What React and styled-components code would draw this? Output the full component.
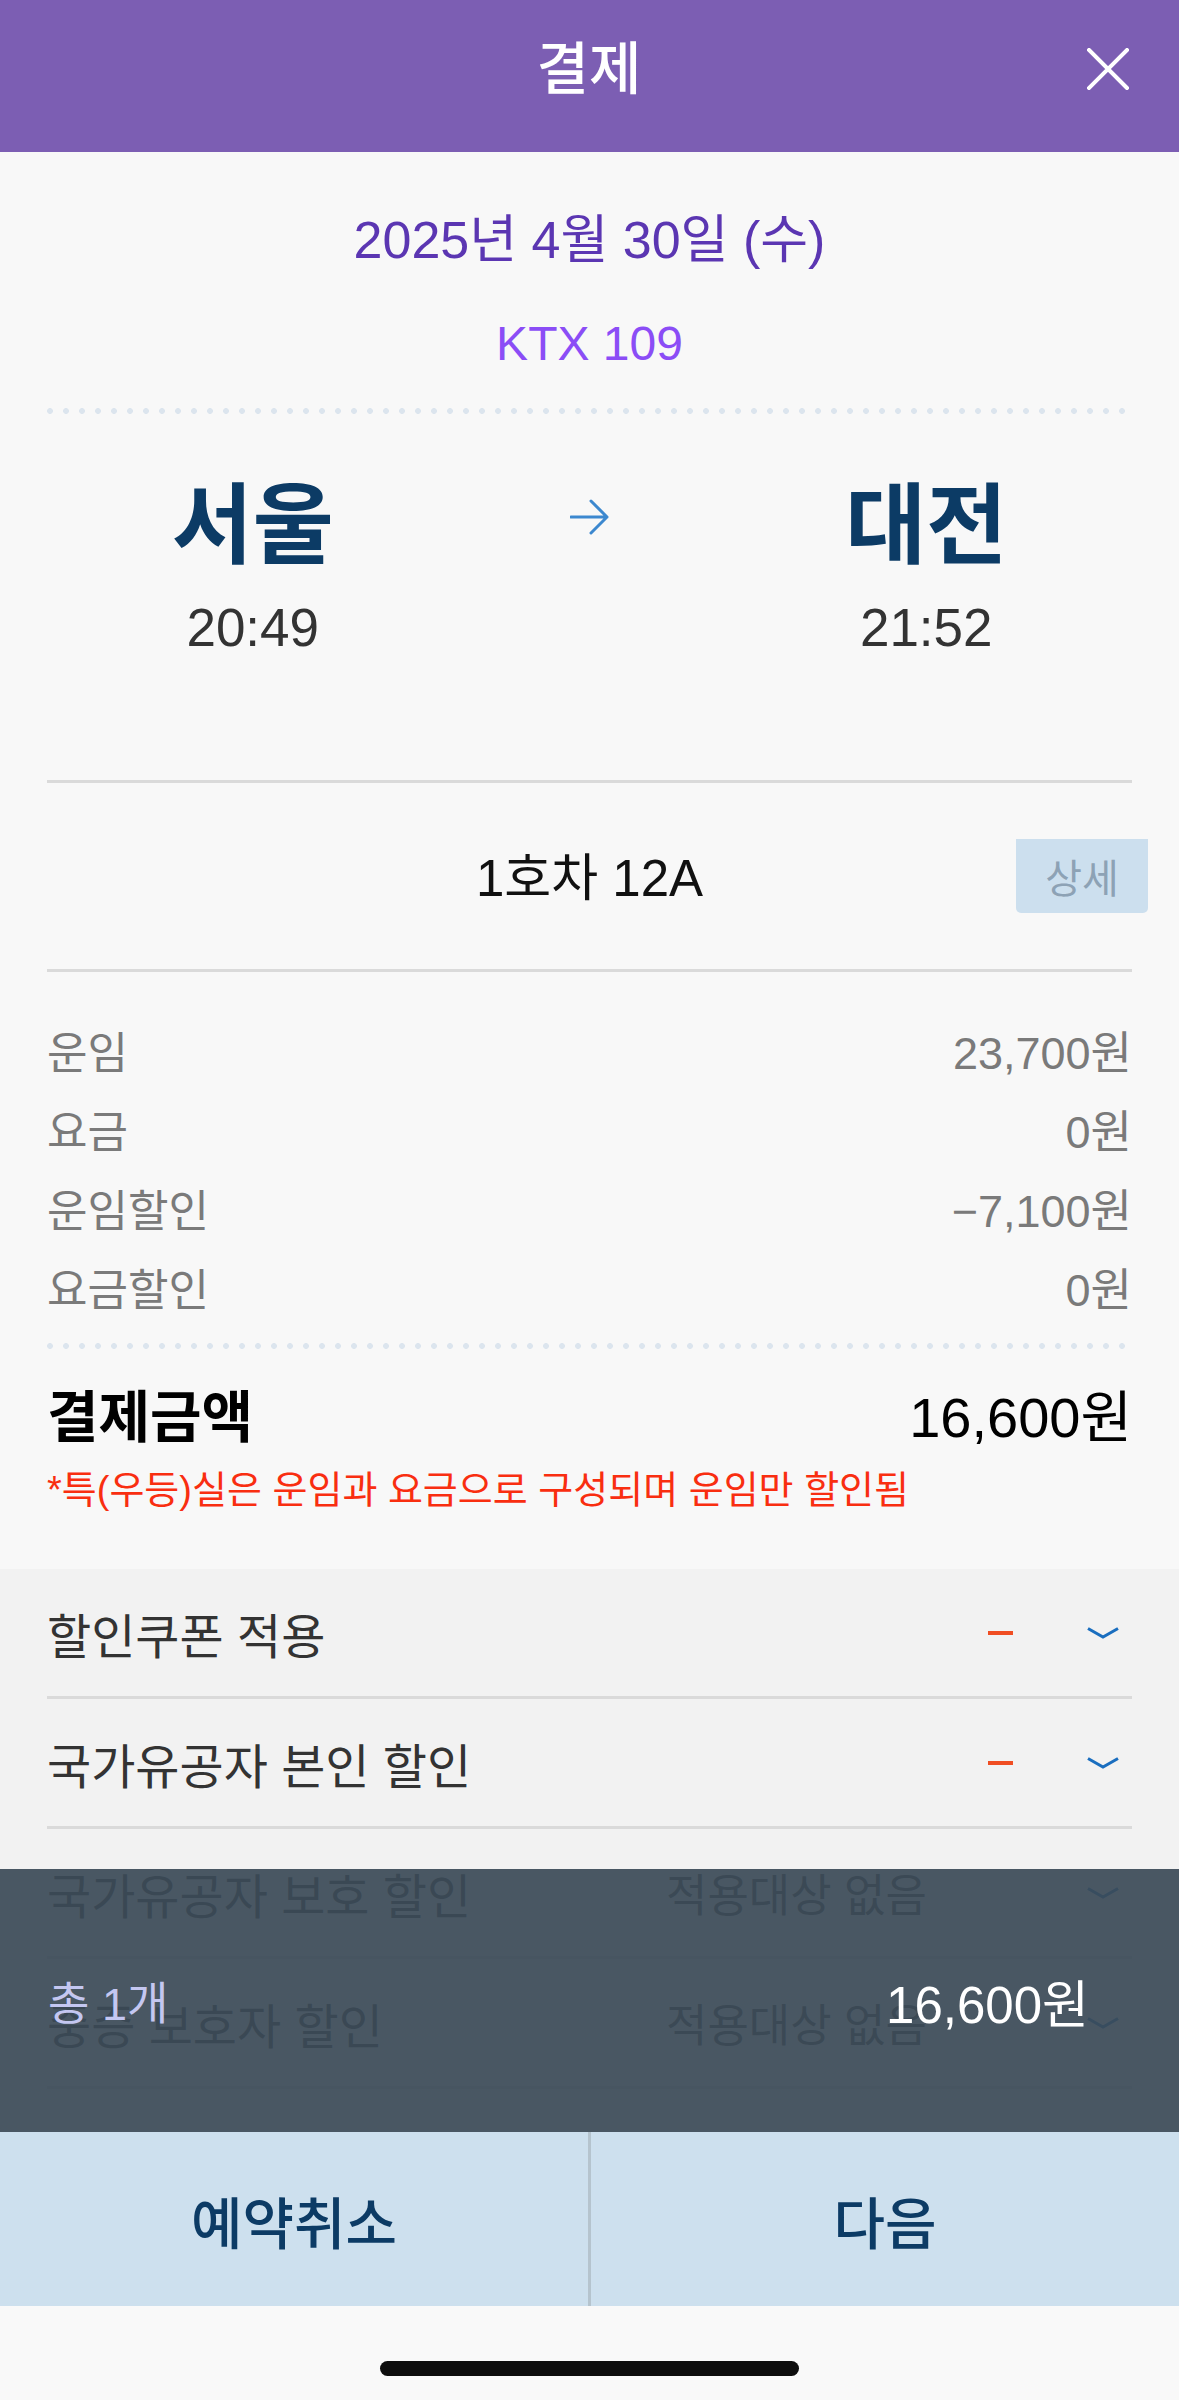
import React from "react";
import styled, { createGlobalStyle } from "styled-components";

const GlobalStyle = createGlobalStyle`
  html, body { margin: 0; padding: 0; background: #f8f8f8; }
  body { font-family: "Liberation Sans", "Noto Sans CJK KR", sans-serif; }
  * { box-sizing: border-box; }
`;

const Page = styled.div`
  position: relative;
  width: 1179px;
  min-height: 2400px;
  display: flex;
  flex-direction: column;
  background: #f8f8f8;
  overflow: hidden;
`;

const Header = styled.header`
  height: 152px;
  background: #7c5eb3;
  display: grid;
  grid-template-columns: 1fr auto 1fr;
  align-items: center;
  padding: 0 50px 14px 49px;
`;

const Title = styled.h1`
  grid-column: 2;
  margin: 0;
  font-size: 57px;
  font-weight: 500;
  color: #ffffff;
  line-height: 64px;
`;

const CloseButton = styled.button`
  grid-column: 3;
  justify-self: end;
  width: 42px;
  height: 42px;
  padding: 0;
  border: none;
  background: none;
  display: flex;
`;

const TrainInfo = styled.section`
  display: flex;
  flex-direction: column;
  align-items: center;
  padding-top: 58px;
`;

const DateText = styled.div`
  font-size: 52px;
  line-height: 60px;
  color: #5b36b2;
`;

const TrainNo = styled.div`
  margin-top: 44px;
  font-size: 48px;
  line-height: 60px;
  color: #8b4df6;
`;

const Dotted = styled.div`
  align-self: stretch;
  margin: ${(p) => p.$top}px 47px 0;
  height: 6px;
  background-image: radial-gradient(circle, #dce5ee 2.6px, transparent 3.2px);
  background-size: 16px 6px;
  background-position: -5px 0;
  background-repeat: repeat-x;
`;

const Route = styled.div`
  display: grid;
  grid-template-columns: 1fr 262px 1fr;
  align-items: center;
  padding: 54px 47px 0;
`;

const Stop = styled.div`
  display: flex;
  flex-direction: column;
  align-items: center;
`;

const Station = styled.div`
  font-family: "Noto Sans CJK KR", sans-serif;
  font-size: 88px;
  font-weight: 700;
  line-height: 100px;
  color: #0c3b65;
`;

const Time = styled.div`
  margin-top: 28px;
  font-size: 53px;
  line-height: 64px;
  color: #333333;
`;

const ArrowWrap = styled.div`
  align-self: start;
  display: flex;
  justify-content: center;
  padding-top: 31px;
`;

const Rule = styled.div`
  margin: ${(p) => p.$top || 0}px 47px 0;
  height: 3px;
  background: #dadada;
`;

const SeatRow = styled.div`
  height: 186px;
  display: grid;
  grid-template-columns: 1fr auto 1fr;
  align-items: center;
  padding: 0 31px;
`;

const SeatText = styled.div`
  grid-column: 2;
  font-size: 51px;
  line-height: 60px;
  color: #111111;
  padding-top: 6px;
`;

const DetailButton = styled.button`
  grid-column: 3;
  justify-self: end;
  width: 132px;
  height: 74px;
  border: none;
  border-radius: 0 0 5px 5px;
  background: #ccdfee;
  color: #8da2b5;
  font-family: "Noto Sans CJK KR", sans-serif;
  font-size: 40px;
  padding: 0;
`;

const FareList = styled.div`
  display: flex;
  flex-direction: column;
  padding: 38px 47px 0;
`;

const FareRow = styled.div`
  display: flex;
  justify-content: space-between;
  align-items: center;
  height: 79px;
  font-size: 44px;
  color: #7a7a7a;
`;

const FareValue = styled.span`
  font-size: 45px;
`;

const TotalRow = styled.div`
  display: flex;
  justify-content: space-between;
  align-items: center;
  height: 70px;
  margin: 28px 47px 0;
  font-size: 56px;
  color: #000000;
`;

const TotalLabel = styled.span`
  font-weight: 700;
`;

const Note = styled.div`
  margin: 18px 47px 0;
  font-size: 38px;
  line-height: 50px;
  color: #f92e10;
`;

const Discounts = styled.section`
  margin-top: 54px;
  flex: 1;
  background: #f2f2f2;
  padding: 0 47px;
`;

const DiscountRow = styled.div`
  height: 130px;
  display: flex;
  align-items: center;
  border-bottom: 3px solid #dadada;
`;

const DiscountLabel = styled.div`
  flex: 1;
  font-size: 48px;
  color: #333333;
`;

const DiscountValue = styled.div`
  width: 375px;
  display: flex;
  justify-content: ${(p) => (p.$empty ? "flex-start" : "flex-end")};
  padding-right: 28px;
  font-size: 45px;
  color: #444444;
`;

const Dash = styled.span`
  width: 25px;
  height: 4px;
  background: #f04e23;
`;

const ChevronBox = styled.div`
  width: 91px;
  display: flex;
  justify-content: flex-end;
  padding-right: 13px;
`;

const Dock = styled.div`
  position: absolute;
  left: 0;
  right: 0;
  bottom: 0;
  display: flex;
  flex-direction: column;
`;

const Summary = styled.div`
  height: 263px;
  background: rgba(59, 74, 87, 0.92);
  display: flex;
  justify-content: space-between;
  align-items: center;
  padding: 0 90px 0 48px;
`;

const Count = styled.span`
  font-size: 45px;
  color: #c4c7f1;
`;

const SummaryPrice = styled.span`
  font-size: 51px;
  color: #ffffff;
`;

const ActionBar = styled.div`
  height: 174px;
  display: grid;
  grid-template-columns: 1fr 3px 1fr;
  background: #cde0ee;
`;

const ActionSep = styled.div`
  background: #b5c4ce;
`;

const ActionButton = styled.button`
  border: none;
  background: transparent;
  font-family: "Noto Sans CJK KR", sans-serif;
  font-size: 56px;
  font-weight: 500;
  color: #0c3b65;
  padding: 0;
`;

const HomeArea = styled.div`
  height: 94px;
  background: #f9f9f9;
  display: flex;
  justify-content: center;
  padding-top: 55px;
`;

const HomeBar = styled.div`
  width: 419px;
  height: 15px;
  border-radius: 8px;
  background: #0d0d0d;
`;

const CloseIcon = () => (
  <svg width="42" height="42" viewBox="0 0 42 42">
    <path d="M2 2 L40 40 M40 2 L2 40" stroke="#fff" strokeWidth="4" strokeLinecap="square" />
  </svg>
);

const ArrowIcon = () => (
  <svg width="40" height="36" viewBox="0 0 40 36">
    <path d="M1 18 H37 M21 2 L37 18 L21 34" fill="none" stroke="#3c88cf" strokeWidth="3" strokeLinecap="round" strokeLinejoin="round" />
  </svg>
);

const Chevron = () => (
  <svg width="32" height="12" viewBox="0 0 32 12">
    <path d="M1 1.5 L16 10 L31 1.5" fill="none" stroke="#1a6ebf" strokeWidth="3" />
  </svg>
);

const fares = [
  ["운임", "23,700원"],
  ["요금", "0원"],
  ["운임할인", "\u22127,100원"],
  ["요금할인", "0원"],
];

const discounts = [
  ["할인쿠폰 적용", null],
  ["국가유공자 본인 할인", null],
  ["국가유공자 보호 할인", "적용대상 없음"],
  ["중증 보호자 할인", "적용대상 없음"],
];

export default function App() {
  return (
    <Page>
      <GlobalStyle />
      <Header>
        <Title>결제</Title>
        <CloseButton aria-label="닫기">
          <CloseIcon />
        </CloseButton>
      </Header>

      <TrainInfo>
        <DateText>2025년 4월 30일 (수)</DateText>
        <TrainNo>KTX 109</TrainNo>
      </TrainInfo>
      <Dotted $top={34} />

      <Route>
        <Stop>
          <Station>서울</Station>
          <Time>20:49</Time>
        </Stop>
        <ArrowWrap>
          <ArrowIcon />
        </ArrowWrap>
        <Stop>
          <Station>대전</Station>
          <Time>21:52</Time>
        </Stop>
      </Route>

      <Rule $top={120} />
      <SeatRow>
        <SeatText>1호차 12A</SeatText>
        <DetailButton>상세</DetailButton>
      </SeatRow>
      <Rule />

      <FareList>
        {fares.map(([label, value]) => (
          <FareRow key={label}>
            <span>{label}</span>
            <FareValue>{value}</FareValue>
          </FareRow>
        ))}
      </FareList>
      <Dotted $top={17} />

      <TotalRow>
        <TotalLabel>결제금액</TotalLabel>
        <span>16,600원</span>
      </TotalRow>
      <Note>*특(우등)실은 운임과 요금으로 구성되며 운임만 할인됨</Note>

      <Discounts>
        {discounts.map(([label, value]) => (
          <DiscountRow key={label}>
            <DiscountLabel>{label}</DiscountLabel>
            <DiscountValue $empty={!!value}>{value ? value : <Dash />}</DiscountValue>
            <ChevronBox>
              <Chevron />
            </ChevronBox>
          </DiscountRow>
        ))}
      </Discounts>

      <Dock>
        <Summary>
          <Count>총 1개</Count>
          <SummaryPrice>16,600원</SummaryPrice>
        </Summary>
        <ActionBar>
          <ActionButton>예약취소</ActionButton>
          <ActionSep />
          <ActionButton>다음</ActionButton>
        </ActionBar>
        <HomeArea>
          <HomeBar />
        </HomeArea>
      </Dock>
    </Page>
  );
}
